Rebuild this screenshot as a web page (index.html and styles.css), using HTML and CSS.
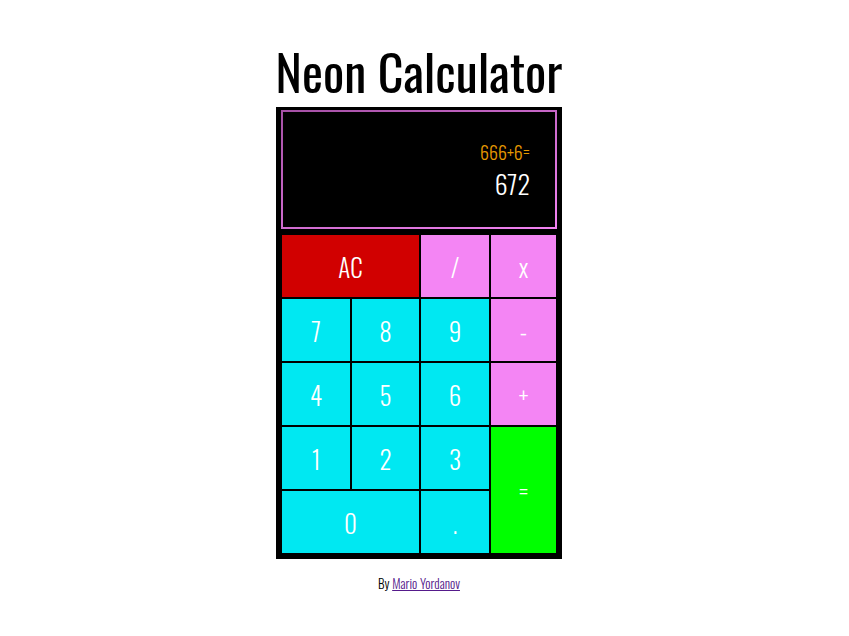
FILE: index.html
```html
<!DOCTYPE html>
<html lang="en">
<head>
<meta charset="utf-8">
<title>Neon Calculator</title>
<link rel="stylesheet" href="styles.css">
</head>
<body>
<h1 class="title">Neon Calculator</h1>
<div class="calc">
  <div class="display">
    <div class="expr">666+6=</div>
    <div class="result">672</div>
  </div>
  <div class="keys">
    <button class="key red span2">AC</button>
    <button class="key pink">/</button>
    <button class="key pink">x</button>
    <button class="key cyan">7</button>
    <button class="key cyan">8</button>
    <button class="key cyan">9</button>
    <button class="key pink">-</button>
    <button class="key cyan">4</button>
    <button class="key cyan">5</button>
    <button class="key cyan">6</button>
    <button class="key pink">+</button>
    <button class="key cyan">1</button>
    <button class="key cyan">2</button>
    <button class="key cyan">3</button>
    <button class="key green tall">=</button>
    <button class="key cyan span2">0</button>
    <button class="key cyan">.</button>
  </div>
</div>
<p class="credit">By <a href="#" class="credit-link">Mario Yordanov</a></p>
</body>
</html>
```
FILE: styles.css
```css
html, body {
  background: #ffffff;
}
body {
  margin: 0;
  padding: 45px 11px 0 0;
  display: flex;
  flex-direction: column;
  align-items: center;
  font-family: "Oswald", "Liberation Sans Narrow", sans-serif;
}
.title {
  margin: 0 0 12px;
  font-size: 50px;
  line-height: 1;
  font-weight: 400;
  color: #000;
}
.calc {
  width: 286px;
  box-sizing: border-box;
  background: #000;
  padding: 3px 5px 6px 5px;
}
.display {
  box-sizing: border-box;
  height: 119px;
  border: 2px solid transparent;
  border-image: linear-gradient(160deg, #a550a5, #f283f2) 1;
  padding: 31px 25px 0 0;
  display: flex;
  flex-direction: column;
  align-items: flex-end;
}
.expr {
  color: #e89a00;
  font-size: 18px;
  line-height: 1;
  font-weight: 300;
}
.result {
  margin-top: 10px;
  color: #ffffff;
  font-size: 26px;
  line-height: 1;
  font-weight: 300;
}
.keys {
  margin: 6px 1px 0;
  display: grid;
  grid-template-columns: 68px 67px 68px 65px;
  grid-auto-rows: 62px;
  gap: 2px;
}
.key {
  border: 0;
  margin: 0;
  padding: 0;
  display: flex;
  align-items: center;
  justify-content: center;
  color: #ffffff;
  font-family: "Oswald", "Liberation Sans Narrow", sans-serif;
  font-size: 25px;
  font-weight: 300;
}
.span2 { grid-column: span 2; }
.tall { grid-row: span 2; }
.red { background: #d10000; }
.pink { background: #f485f4; }
.cyan { background: #00e8f2; }
.green { background: #00ff00; }
.credit {
  margin: 14px 0 0;
  font-size: 13px;
  font-weight: 300;
  color: #000;
}
.credit-link {
  color: #551a8b;
}
```
